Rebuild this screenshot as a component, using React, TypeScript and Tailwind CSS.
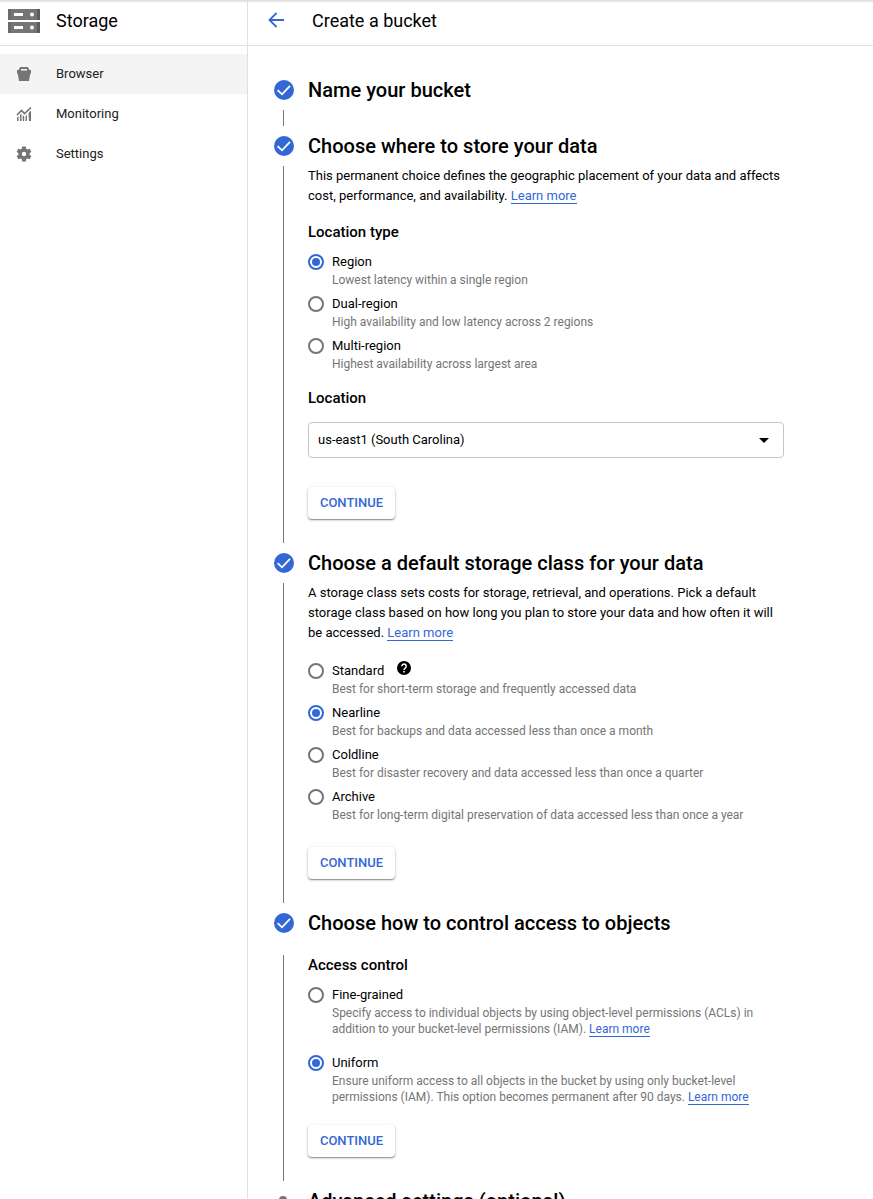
import React from "react";

const LearnMore = () => (
  <a href="#" className="border-b border-[#3367d6] text-[#3367d6]">
    Learn more
  </a>
);

const CheckBadge = () => (
  <svg className="size-5 shrink-0" viewBox="0 0 20 20">
    <circle cx="10" cy="10" r="10" fill="#3367d6" />
    <path d="M3.6 10.2 8 14.3 16 5.8" fill="none" stroke="#fff" strokeWidth="1.8" />
  </svg>
);

const Step = ({ title, children, lineClass = "mt-2.5" }: { title: string; children?: React.ReactNode; lineClass?: string }) => (
  <section className="flex gap-3.5">
    <div className="flex w-5 shrink-0 flex-col items-center">
      <CheckBadge />
      <div className={`mr-px mb-2.5 w-px flex-1 bg-[#757575] ${lineClass}`} />
    </div>
    <div className="w-[476px]">
      <h2 className="h-5 text-[20px] leading-5 font-medium tracking-[0.015px] whitespace-nowrap">{title}</h2>
      {children}
    </div>
  </section>
);

const Option = ({
  label,
  checked = false,
  help = false,
  children,
}: {
  label: string;
  checked?: boolean;
  help?: boolean;
  children: React.ReactNode;
}) => (
  <label className="flex gap-2">
    <svg className="mt-0.5 size-4 shrink-0" viewBox="0 0 16 16">
      <circle cx="8" cy="8" r="7" fill="none" strokeWidth="2" stroke={checked ? "#3367d6" : "#757575"} />
      {checked && <circle cx="8" cy="8" r="4" fill="#3367d6" />}
    </svg>
    <div>
      <div className="flex h-5 text-[13px] leading-5">
        {label}
        {help && (
          <svg className="-mt-px ml-3 size-4" viewBox="0 0 16 16">
            <circle cx="8" cy="8" r="7" />
            <path d="M5.8 6.200a2.200 2.200 0 1 1 3.400 1.850C8.400 8.600 8 8.900 8 9.900" fill="none" stroke="#fff" strokeWidth="1.500" />
            <path d="M7.200 11h1.600v1.600H7.200z" fill="#fff" />
          </svg>
        )}
      </div>
      <div className="text-[12px] leading-4 whitespace-nowrap text-[#757575]">{children}</div>
    </div>
  </label>
);

const Continue = () => (
  <button className="h-8 w-[87px] rounded bg-white text-[13px] leading-8 font-medium text-[#3367d6] shadow-[0_1px_3px_rgba(0,0,0,0.25),0_1px_1px_rgba(0,0,0,0.3)]">
    CONTINUE
  </button>
);

const Sub = ({ children }: { children: React.ReactNode }) => (
  <h3 className="text-[15px] leading-5 font-medium">{children}</h3>
);

const NavItem = ({ label, active = false, children }: { label: string; active?: boolean; children: React.ReactNode }) => (
  <a href="#" className={`flex h-10 items-center pl-4 text-[13px] text-[#212121] ${active ? "bg-[#f4f4f4]" : ""}`}>
    <svg className="mr-6 size-4" viewBox="0 0 16 16" fill="#757575">
      {children}
    </svg>
    {label}
  </a>
);

export default function App() {
  return (
    <div className="relative flex h-screen overflow-hidden bg-white font-['Roboto',sans-serif] text-black">
      <div className="absolute inset-x-0 top-0 h-[3px] bg-linear-to-b from-[#d8d8d8] to-transparent" />
      <aside className="w-[248px] shrink-0 border-r border-[#e0e0e0]">
        <header className="flex h-[46px] items-center border-b border-[#e0e0e0] pb-1 pl-2">
          <svg className="mt-px mr-4 h-6 w-8" viewBox="0 0 32 24">
            {[0, 13].map((y) => (
              <g key={y}>
                <path d={`M0 ${y}h32v11H0z`} fill="#757575" />
                <path d={`M0 ${y}h3v11H0z`} fill="#6a6a6a" />
                <path d={`M29 ${y}h3v11h-3z`} fill="#5c5c5c" />
                <path d={`M6 ${y + 4}h9v3H6z`} fill="#fff" />
                <circle cx="24" cy={y + 5.5} r="2" fill="#fff" />
              </g>
            ))}
          </svg>
          <span className="text-[18px]">Storage</span>
        </header>
        <nav className="pt-2">
          <NavItem label="Browser" active>
            <path
              fillRule="evenodd"
              d="M4.500 1h7L13 2.500V4h2v3.500h-.7L13 15H3L1.700 7.500H1V4h2V2.500zM5 3v1.500h6V3z"
            />
          </NavItem>
          <NavItem label="Monitoring">
            <path d="M1 11.500 2.500 10v5H1zM4 9l1.500-1.500V15H4zM6.700 9l1.500 1.500V15H6.700zM9.600 10.200 11 8.700V15H9.600zM12.500 7 15 4.500V15h-2z" />
            <path d="M1 9l4.500-4.500 3 3L15 1.500" fill="none" stroke="#757575" strokeWidth="1.700" />
          </NavItem>
          <NavItem label="Settings">
            <path transform="translate(-1 -1) scale(.75)" d="M19.430 12.980c.04-.32.070-.64.070-.98s-.03-.66-.07-.98l2.110-1.650c.19-.15.240-.42.120-.64l-2-3.460c-.12-.22-.39-.3-.61-.22l-2.490 1c-.52-.4-1.080-.73-1.690-.98l-.38-2.650C14.460 2.180 14.250 2 14 2h-4c-.25 0-.46.180-.49.420l-.38 2.650c-.61.250-1.170.590-1.690.980l-2.490-1c-.23-.09-.49 0-.61.220l-2 3.460c-.13.220-.07.490.120.640l2.110 1.650c-.04.320-.07.650-.07.980s.030.660.070.980l-2.110 1.650c-.19.150-.24.420-.12.640l2 3.460c.12.220.390.300.610.220l2.490-1c.52.400 1.080.730 1.690.980l.38 2.650c.03.240.240.420.490.420h4c.25 0 .46-.18.490-.42l.38-2.650c.61-.25 1.170-.59 1.690-.98l2.490 1c.23.090.490 0 .61-.22l2-3.460c.12-.22.070-.49-.12-.64l-2.110-1.650zM12 15a3 3 0 1 1 0-6 3 3 0 0 1 0 6z" />
          </NavItem>
        </nav>
      </aside>
      <main className="min-w-0 flex-1">
        <header className="flex h-[46px] items-center border-b border-[#e0e0e0] pb-1 pl-5">
          <svg className="-mt-px mr-7 size-4" viewBox="0 0 16 16" fill="none" stroke="#3367d6" strokeWidth="1.8">
            <path d="M16 8H1.500M8.500 1 1.500 8l7 7" />
          </svg>
          <h1 className="text-[18px]">Create a bucket</h1>
        </header>
        <div className="flex flex-col pt-[34px] pl-[26px]">
          <Step title="Name your bucket">
            <div className="h-9" />
          </Step>
          <Step title="Choose where to store your data">
            <p className="mt-2.5 text-[13px] leading-5 whitespace-nowrap">
              This permanent choice defines the geographic placement of your data and affects
              <br />
              cost, performance, and availability. <LearnMore />
            </p>
            <div className="mt-4 mb-2.5">
              <Sub>Location type</Sub>
            </div>
            <div className="flex flex-col gap-1.5">
              <Option label="Region" checked>Lowest latency within a single region</Option>
              <Option label="Dual-region">High availability and low latency across 2 regions</Option>
              <Option label="Multi-region">Highest availability across largest area</Option>
            </div>
            <div className="mt-4 mb-3.5">
              <Sub>Location</Sub>
            </div>
            <div className="flex h-9 items-center justify-between rounded border border-[#c6c6c6] pr-3.5 pl-[9px] text-[13px]">
              us-east1 (South Carolina)
              <svg className="h-[5px] w-2.5" viewBox="0 0 10 5">
                <path d="M0 0h10L5 5z" />
              </svg>
            </div>
            <div className="flex pt-[29px] pb-[34px]">
              <Continue />
            </div>
          </Step>
          <Step title="Choose a default storage class for your data">
            <p className="mt-2.5 text-[13px] leading-5 whitespace-nowrap">
              A storage class sets costs for storage, retrieval, and operations. Pick a default
              <br />
              storage class based on how long you plan to store your data and how often it will
              <br />
              be accessed. <LearnMore />
            </p>
            <div className="mt-[18px] flex flex-col gap-1.5">
              <Option label="Standard" help>Best for short-term storage and frequently accessed data</Option>
              <Option label="Nearline" checked>Best for backups and data accessed less than once a month</Option>
              <Option label="Coldline">Best for disaster recovery and data accessed less than once a quarter</Option>
              <Option label="Archive">Best for long-term digital preservation of data accessed less than once a year</Option>
            </div>
            <div className="flex pt-6 pb-[34px]">
              <Continue />
            </div>
          </Step>
          <Step title="Choose how to control access to objects" lineClass="mt-[22px]">
            <div className="mt-[22px] mb-2.5">
              <Sub>Access control</Sub>
            </div>
            <div className="flex flex-col gap-4">
              <Option label="Fine-grained">
                Specify access to individual objects by using object-level permissions (ACLs) in
                <br />
                addition to your bucket-level permissions (IAM). <LearnMore />
              </Option>
              <Option label="Uniform" checked>
                Ensure uniform access to all objects in the bucket by using only bucket-level
                <br />
                permissions (IAM). This option becomes permanent after 90 days. <LearnMore />
              </Option>
            </div>
            <div className="flex pt-5 pb-[34px]">
              <Continue />
            </div>
          </Step>
          <section className="flex gap-3.5">
            <div className="flex w-5 justify-center pt-[5px] pr-0.5">
              <span className="size-2 rounded-full bg-[#757575]" />
            </div>
            <h2 className="text-[20px] leading-5 font-medium">Advanced settings (optional)</h2>
          </section>
        </div>
      </main>
    </div>
  );
}
